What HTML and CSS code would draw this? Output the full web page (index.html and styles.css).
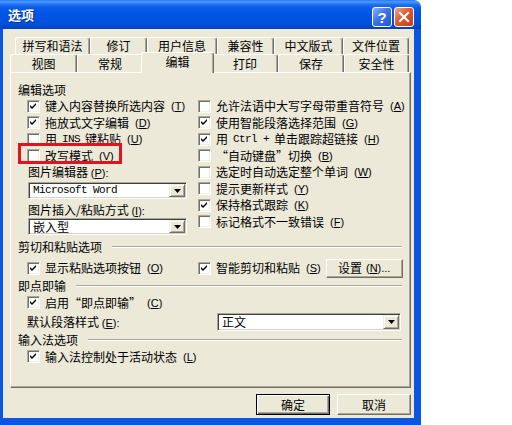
FILE: index.html
```html
<!DOCTYPE html>
<html lang="zh-CN">

<head>
    <meta charset="UTF-8">
    <meta name="viewport" content="width=device-width, initial-scale=1.0">
    <title>选项</title>
    <link rel="stylesheet" href="styles.css">
</head>

<body>

    <div class="window">
        <!-- 편집 흔적 (흰 띠) -->
        <div class="wipe"></div>

        <div class="titlebar">
            <span class="title">选项</span>
            <div class="capBtns">
                <span class="cap help">?</span>
                <span class="cap close">
                    <svg width="12" height="12" viewBox="0 0 12 12"><path d="M2 2 L10 10 M10 2 L2 10" stroke="#fff" stroke-width="2.2" stroke-linecap="square"/></svg>
                </span>
            </div>
        </div>

        <div class="frame">
            <div class="tabs">
                <div class="tabRow back">
                    <div class="tab">拼写和语法</div>
                    <div class="tab">修订</div>
                    <div class="tab">用户信息</div>
                    <div class="tab">兼容性</div>
                    <div class="tab">中文版式</div>
                    <div class="tab">文件位置</div>
                </div>
                <div class="tabRow front">
                    <div class="tab">视图</div>
                    <div class="tab">常规</div>
                    <div class="tab sel">编辑</div>
                    <div class="tab">打印</div>
                    <div class="tab">保存</div>
                    <div class="tab">安全性</div>
                </div>
            </div>

            <div class="panel">
                <!-------- 编辑选项 -------->
                <div class="groupTitle noLine">编辑选项</div>
                <div class="cols edit">
                    <div class="col">
                        <div class="check"><span class="box on"></span>键入内容替换所选内容<span class="key">(<u>T</u>)</span></div>
                        <div class="check"><span class="box on"></span>拖放式文字编辑<span class="key">(<u>D</u>)</span></div>
                        <div class="check"><span class="box"></span>用 <span class="mono">INS</span> 键粘贴<span class="key">(<u>U</u>)</span></div>
                        <div class="check"><span class="box"></span>改写模式<span class="key">(<u>V</u>)</span></div>
                        <div class="label first">图片编辑器 <span class="key">(<u>P</u>):</span></div>
                        <div class="combo small"><span class="value mono">Microsoft Word</span><span class="drop"></span></div>
                        <div class="label">图片插入/粘贴方式 <span class="key">(<u>I</u>):</span></div>
                        <div class="combo small tight"><span class="value">嵌入型</span><span class="drop"></span></div>
                    </div>
                    <div class="col">
                        <div class="check"><span class="box"></span>允许法语中大写字母带重音符号<span class="key">(<u>A</u>)</span></div>
                        <div class="check"><span class="box on"></span>使用智能段落选择范围<span class="key">(<u>G</u>)</span></div>
                        <div class="check"><span class="box on"></span>用 <span class="mono">Ctrl + </span>单击跟踪超链接<span class="key">(<u>H</u>)</span></div>
                        <div class="check"><span class="box"></span>“自动键盘”切换<span class="key">(<u>B</u>)</span></div>
                        <div class="check"><span class="box"></span>选定时自动选定整个单词<span class="key">(<u>W</u>)</span></div>
                        <div class="check"><span class="box"></span>提示更新样式<span class="key">(<u>Y</u>)</span></div>
                        <div class="check"><span class="box on"></span>保持格式跟踪<span class="key">(<u>K</u>)</span></div>
                        <div class="check"><span class="box"></span>标记格式不一致错误<span class="key">(<u>F</u>)</span></div>
                    </div>
                </div>

                <!-------- 剪切和粘贴选项 -------->
                <div class="groupTitle gap">剪切和粘贴选项</div>
                <div class="cols paste">
                    <div class="check"><span class="box on"></span>显示粘贴选项按钮<span class="key">(<u>O</u>)</span></div>
                    <div class="check">
                        <span class="box on"></span>智能剪切和粘贴<span class="key">(<u>S</u>)</span>
                        <span class="btn setBtn">设置 <span class="key">(<u>N</u>)...</span></span>
                    </div>
                </div>

                <!-------- 即点即输 -------->
                <div class="groupTitle">即点即输</div>
                <div class="cols single">
                    <div class="check"><span class="box on"></span>启用“即点即输”<span class="key">(<u>C</u>)</span></div>
                </div>
                <div class="cols style">
                    <div class="label">默认段落样式 <span class="key">(<u>E</u>):</span></div>
                    <div class="combo wide"><span class="value">正文</span><span class="drop"></span></div>
                </div>

                <!-------- 输入法选项 -------->
                <div class="groupTitle">输入法选项</div>
                <div class="cols single">
                    <div class="check"><span class="box on"></span>输入法控制处于活动状态<span class="key">(<u>L</u>)</span></div>
                </div>
            </div>

            <div class="buttons">
                <span class="btn default">确定</span>
                <span class="btn">取消</span>
            </div>
        </div>

        <div class="mark"></div>
    </div>

</body>

</html>
```

FILE: styles.css
```css
* {margin: 0; padding: 0; box-sizing: border-box;}
body {background: #fff; color: #000; font: 12px "Noto Sans CJK SC", "Liberation Sans", sans-serif; text-autospace: no-autospace;}
u {text-decoration: underline; text-underline-offset: 1px;}
.key {font-family: "Liberation Sans", sans-serif; font-size: 11px;}
.mono {font-family: "Liberation Mono", monospace; font-size: 11px; letter-spacing: -0.6px;}

/* window */
.window {position: relative; width: 421px; height: 425px;}
.titlebar {height: 29px; display: flex; justify-content: space-between; padding: 0 7px 0 8px; border-top-right-radius: 7px;
    background: linear-gradient(#2a7af5 0, #4d9bff 2px, #2475f3 4px, #0a5ae8 8px, #0055e5 50%, #0050dc 80%, #0046c8 95%, #0a3cb0 100%);}
.title {color: #fff; font-weight: bold; font-size: 13px; line-height: 29px; text-shadow: 1px 1px #0b2a8a;}
.capBtns {display: flex; gap: 2px; margin-top: 7px;}
.cap {width: 20px; height: 20px; border: 1px solid #fff; border-radius: 3px; display: flex; align-items: center; justify-content: center;}
.help {background: linear-gradient(135deg, #8db3fa, #3c74ec 45%, #1d54d6); color: #fff; font: bold 15px "Liberation Sans", sans-serif;}
.close {background: linear-gradient(135deg, #f4a58a, #e2582f 45%, #c33d16);}
.frame {position: relative; height: 396px; border: solid #0a55e2; border-width: 0 7px 7px 3px; background: #ece9d8; padding: 8px 3px 0 7px;}

/* tabs */
.tabs {height: 35px;}
.tabRow {display: flex;}
.back {height: 17px; margin-left: 5px;}
.front {height: 18px;}
.tab {height: 100%; text-align: center; line-height: 14px; padding-top: 1px; background: #ece9d8; border: 1px solid; border-bottom: 0; border-color: #fff #716f64 #fff #fff; border-radius: 3px 3px 0 0; box-shadow: inset -1px 0 #aca899;}
.front .tab {padding-top: 2px;}
.back .tab:nth-child(1) {width: 75px;}
.back .tab:nth-child(2) {width: 57px;}
.back .tab:nth-child(3) {width: 70px;}
.back .tab:nth-child(4) {width: 57px;}
.back .tab:nth-child(5) {width: 69px;}
.back .tab:nth-child(6) {width: 66px;}
.front .tab:nth-child(1) {width: 67px;}
.front .tab:nth-child(2) {width: 66px;}
.front .tab:nth-child(4) {width: 66px;}
.front .tab:nth-child(5) {width: 66px;}
.front .tab:nth-child(6) {width: 65px;}
.front .tab.sel {width: 73px; height: 21px; margin: -2px -2px 0; padding-top: 2px; position: relative; z-index: 1;}

/* panel */
.panel {height: 316px; border: 1px solid; border-color: #fff #716f64 #716f64 #fff; box-shadow: inset -1px -1px #aca899; padding: 9px 8px 0 7px;}
.groupTitle {display: flex; align-items: center; gap: 10px; height: 16px; line-height: 14px;}
.groupTitle::after {content: ""; flex: 1; border-top: 1px solid #aca899; border-bottom: 1px solid #fff;}
.groupTitle.noLine::after {display: none;}
.groupTitle.gap {margin-top: 4px;}
.cols {display: grid; grid-template-columns: 171px 1fr; margin-left: 9px; position: relative;}
.cols.edit {height: 137px;}
.cols.paste {height: 20px; margin-top: 3px; align-items: center;}
.cols.single {height: 17px; align-items: center;}
.cols.style {height: 21px; align-items: center;}

.check {display: flex; align-items: center; gap: 5px; height: 16.5px; line-height: 14px; white-space: nowrap;}
.check .key {margin-left: 1px;}
.box {width: 13px; height: 13px; flex: none; background: #fff; border: 1px solid; border-color: #aca899 #fff #fff #aca899; box-shadow: inset 1px 1px #716f64, inset -1px -1px #f1efe2;}
.box.on {background: #fff url("data:image/svg+xml,%3Csvg xmlns='http://www.w3.org/2000/svg' width='11' height='11'%3E%3Cpath d='M2 4 L4 6 L8 2 L8 4 L4 8 L2 6 Z' fill='%23000'/%3E%3C/svg%3E") no-repeat center;}

.label {height: 14px; line-height: 14px; margin-left: 1px;}
.col .label {margin-top: 4px;}
.col .label.first {margin-top: 1px;}
.cols.style .label {margin: 0;}

.combo {display: flex; height: 17px; background: #fff; border: 1px solid; border-color: #aca899 #fff #fff #aca899; box-shadow: inset 1px 1px #404040, inset -1px -1px #d4d0c8; padding: 1px;}
.combo.small {width: 159px; margin: 3px 0 0 1px;}
.combo.small.tight {margin-top: 1px;}
.combo.wide {width: 184px; height: 18px; margin-left: 19px;}
.combo .value {flex: 1; line-height: 13px; padding-left: 3px; white-space: nowrap;}
.combo.wide .value {line-height: 14px;}
.drop {width: 16px; flex: none; background: #ece9d8 url("data:image/svg+xml,%3Csvg xmlns='http://www.w3.org/2000/svg' width='7' height='4'%3E%3Cpath d='M0 0 H7 L3.5 4 Z' fill='%23000'/%3E%3C/svg%3E") no-repeat center; border: 1px solid; border-color: #f1efe2 #716f64 #716f64 #f1efe2; box-shadow: inset 1px 1px #fff, inset -1px -1px #aca899;}

/* buttons */
.btn {display: inline-flex; align-items: center; justify-content: center; gap: 3px; line-height: 14px; background: #ece9d8; border: 1px solid; border-color: #fff #716f64 #716f64 #fff; box-shadow: inset -1px -1px #aca899;}
.setBtn {width: 77px; height: 19px; margin-left: auto;}
.buttons {display: flex; justify-content: flex-end; gap: 7px; margin-top: 6px;}
.buttons .btn {width: 74px; height: 21px;}
.btn.default {border-color: #000; box-shadow: inset 1px 1px #fff, inset -1px -1px #716f64, inset -2px -2px #aca899;}

/* marks on the screenshot */
.wipe {position: absolute; left: 0; top: 164px; width: 126px; height: 7px; background: #fff;}
.mark {position: absolute; left: 18px; top: 143px; width: 104px; height: 21px; border: 3px solid #e5111d;}
```
